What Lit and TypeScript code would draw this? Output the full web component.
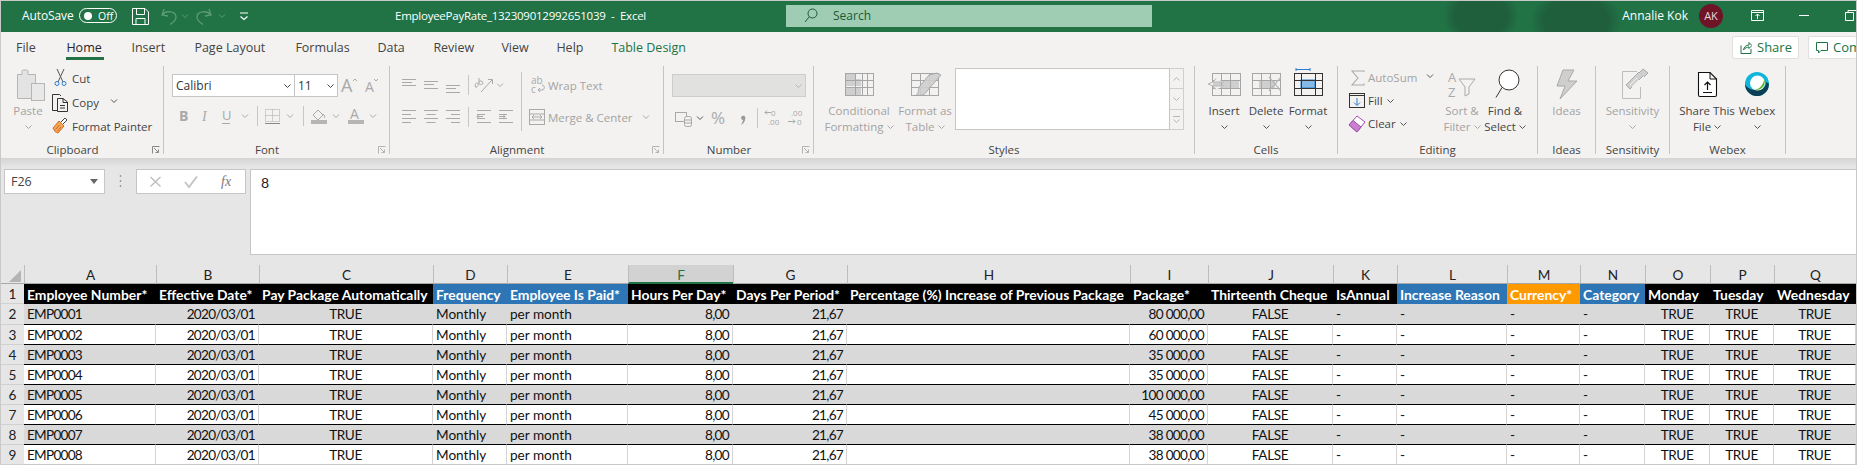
import { LitElement, html, css, svg } from "lit";
import { customElement } from "lit/decorators.js";

const DIS = "#a9a9a9";
const ic = (w: number, h: number, body: unknown) =>
  html`<svg class="ic" width=${w} height=${h} viewBox="0 0 ${w} ${h}" fill="none">${body}</svg>`;
const chevPath = (x: number, y: number, c: string) =>
  svg`<path d="M${x - 3} ${y - 1.5}L${x} ${y + 1.5}L${x + 3} ${y - 1.5}" stroke=${c} stroke-width="1"/>`;
const chev = (w: number, x: number, c = DIS, h = 22) => ic(w, h, chevPath(x, h / 2, c));
const vsep = (w: number, x: number, h = 22) =>
  ic(w, h, svg`<path d="M${x + 0.5} 1V${h - 1}" stroke="#c8c6c4"/>`);
const launcher = html`<svg class="launch" width="8" height="8" viewBox="0 0 8 8" fill="none"><path d="M.5 7.5V.5H7.5" stroke="#8a8886"/><path d="M2 2L6.5 6.5M3.5 6.5H6.5V3.5" stroke="#8a8886"/></svg>`;
const launcherDis = html`<svg class="launch" width="8" height="8" viewBox="0 0 8 8" fill="none"><path d="M.5 7.5V.5H7.5" stroke="#b5b5b5"/><path d="M2 2L6.5 6.5M3.5 6.5H6.5V3.5" stroke="#b5b5b5"/></svg>`;
const lines = (x: number, ys: number[], ws: number[], c = DIS) =>
  svg`${ys.map((y, i) => svg`<path d="M${x} ${y + 0.5}H${x + ws[i]}" stroke=${c}/>`)}`;
const alignTop = (o: number, ys: number[]) => lines(o, ys, [14, 10, 14]);

const grid = (x: number, y: number, w: number, h: number, cols: number[], rows: number[], c: string) => svg`
  <rect x=${x + 0.5} y=${y + 0.5} width=${w} height=${h} stroke=${c}/>
  ${cols.map((v) => svg`<path d="M${x + v + 0.5} ${y}V${y + h}" stroke=${c}/>`)}
  ${rows.map((v) => svg`<path d="M${x} ${y + v + 0.5}H${x + w}" stroke=${c}/>`)}`;

const columns = [
  { l: "A", w: 132, h: "Employee Number*" },
  { l: "B", w: 103, h: "Effective Date*" },
  { l: "C", w: 174, h: "Pay Package Automatically" },
  { l: "D", w: 74, h: "Frequency", k: "blue" },
  { l: "E", w: 121, h: "Employee Is Paid*", k: "blue" },
  { l: "F", w: 105, h: "Hours Per Day*" },
  { l: "G", w: 114, h: "Days Per Period*" },
  { l: "H", w: 283, h: "Percentage (%) Increase of Previous Package" },
  { l: "I", w: 78, h: "Package*" },
  { l: "J", w: 125, h: "Thirteenth Cheque" },
  { l: "K", w: 64, h: "IsAnnual" },
  { l: "L", w: 110, h: "Increase Reason", k: "blue" },
  { l: "M", w: 73, h: "Currency*", k: "orange" },
  { l: "N", w: 65, h: "Category", k: "blue" },
  { l: "O", w: 65, h: "Monday" },
  { l: "P", w: 64, h: "Tuesday" },
  { l: "Q", w: 82, h: "Wednesday" },
];
const aligns = ["t", "r", "c", "", "", "r", "r", "", "r", "c", "", "", "", "", "c", "c", "c"];
const pay = ["80 000,00", "60 000,00", "35 000,00", "35 000,00", "100 000,00", "45 000,00", "38 000,00", "38 000,00"];
const rowsData = pay.map((p, i) => [
  `EMP000${i + 1}`, "2020/03/01", "TRUE", "Monthly", "per month", "8,00", "21,67", "", p, "FALSE", "-", "-", "-", "-", "TRUE", "TRUE", "TRUE",
]);
const tabs = [
  ["File", 50.4], ["Home", 65], ["Insert", 63], ["Page Layout", 101], ["Formulas", 82], ["Data", 56], ["Review", 68], ["View", 55], ["Help", 55], ["Table Design", 100],
] as [string, number][];

@customElement("app-root")
export class AppRoot extends LitElement {
  static styles = css`
    :host { display: block; width: 1857px; height: 465px; overflow: hidden; box-sizing: border-box; border: 1px solid #c9c9c9; border-bottom: 0; background: #e6e6e6; font-family: "Open Sans", "Noto Sans", sans-serif; font-size: 12px; color: #444; }
    .ic { display: block; flex: none; }
    /* title bar */
    .title { height: 31px; box-sizing: border-box; padding-bottom: 2px; display: flex; align-items: center; color: #fff; background: radial-gradient(ellipse 38px 30px at 1480px 15px, #1f5f3c 70%, transparent 100%), radial-gradient(ellipse 46px 34px at 1575px 20px, #1f5f3c 70%, transparent 100%), #217346; }
    .as { width: 57px; margin-left: 21px; flex: none; letter-spacing: -0.1px; }
    .toggle { width: 38px; height: 15px; box-sizing: border-box; border: 1px solid #fff; border-radius: 8px; flex: none; display: flex; align-items: center; font-size: 10.5px; }
    .knob { width: 8px; height: 8px; background: #fff; border-radius: 50%; margin: 0 6px 0 4px; }
    .fname { width: 528px; padding-left: 137px; box-sizing: border-box; flex: none; font-size: 11.5px; white-space: pre; letter-spacing: -0.25px; }
    .search { width: 366px; height: 22px; flex: none; background: #9fcdb3; color: #1b5a37; display: flex; align-items: center; gap: 15px; padding-left: 18px; box-sizing: border-box; }
    .user { flex: 1; text-align: right; padding-right: 11px; font-size: 12px; }
    .avatar { width: 24px; height: 24px; border-radius: 50%; background: #6f1326; display: flex; align-items: center; justify-content: center; font-size: 11px; color: #e8d7da; flex: none; }
    /* ribbon */
    .ribbon { background: #f3f2f1; height: 126px; }
    .tabs { height: 34px; display: flex; align-items: center; padding-left: 15px; box-sizing: border-box; }
    .tab { flex: none; height: 24px; line-height: 22px; font-size: 12.5px; color: #444; position: relative; white-space: nowrap; }
    .tab.on { color: #262626; }
    .tab.on i { position: absolute; left: 0; top: 20px; width: 38px; height: 3px; background: #217346; }
    .tab.design { color: #217346; }
    .spacer { flex: 1; }
    .btn { height: 23px; box-sizing: border-box; background: #fff; border: 1px solid #e1dfdd; display: flex; align-items: center; color: #217346; font-size: 13px; gap: 5px; border-radius: 2px; flex: none; }
    .share { width: 67px; padding-left: 7px; margin: 0 9px 4px 0; }
    .comments { width: 48px; padding-left: 7px; margin-bottom: 4px; overflow: hidden; white-space: nowrap; border-right: 0; }
    .groups { display: flex; height: 88px; }
    .g { box-sizing: border-box; height: 88px; flex: none; border-right: 1px solid #c4c4c4; display: flex; flex-direction: column; }
    .body { height: 76px; box-sizing: border-box; display: flex; flex: none; }
    .label { height: 12px; line-height: 16px; display: flex; align-items: flex-start; flex: none; font-size: 11.5px; }
    .label b { font-weight: 400; flex: 1; text-align: center; white-space: nowrap; }
    .label.pad b { padding-right: 8px; }
    .launch { margin: 4px 3px 0 0; flex: none; }
    .big { display: flex; flex-direction: column; align-items: center; flex: none; line-height: 16px; white-space: nowrap; font-size: 11.5px; }
    .line { height: 16px; display: flex; align-items: center; gap: 3px; }
    .dis { color: #a3a3a3; }
    .row { display: flex; align-items: center; flex: none; }
    .small { height: 24px; white-space: nowrap; font-size: 11.5px; }
    .small.e { height: 23px; }
    .stack { display: flex; flex-direction: column; flex: none; }
    .sw106 { width: 106px; }
    .w163 { width: 163px; } .w226 { width: 226px; } .w274 { width: 274px; } .w150 { width: 150px; } .w381 { width: 381px; } .w143 { width: 143px; } .w200 { width: 200px; } .w58 { width: 58px; } .w74 { width: 74px; } .w116 { width: 116px; }
    .ml1 { margin-left: 1px; } .ml2 { margin-left: 2px; } .ml9 { margin-left: 9px; } .ml6 { margin-left: 6px; } .ml8 { margin-left: 8px; } .ml7 { margin-left: 7px; } .ml4 { margin-left: 4px; }
    .bw36 { width: 36px; } .bw42 { width: 42px; } .bw76 { width: 76px; } .bw56 { width: 56px; } .bw50 { width: 50px; } .bw57 { width: 57px; } .bw73 { width: 73px; } .bw66 { width: 66px; } .bw34 { width: 34px; }
    .font { padding: 8px 0 0 8px; gap: 8px; }
    .combo { height: 23px; box-sizing: border-box; background: #fff; border: 1px solid #c6c6c6; display: flex; align-items: center; font-size: 12px; color: #333; flex: none; justify-content: space-between; padding: 0 3px; }
    .combo + .combo { border-left: 0; }
    .cw123 { width: 123px; } .cw43 { width: 43px; }
    .a-rows { padding: 8px 0 0 10px; width: 131px; box-sizing: border-box; gap: 10px; }
    .longsep { width: 1px; height: 59px; margin: 6px 0 0 0; background: #c8c6c4; flex: none; }
    .a-col { padding-top: 8px; gap: 10px; }
    .r22 { height: 22px; font-size: 11.5px; white-space: nowrap; }
    .num { padding: 8px 0 0 8px; gap: 10px; }
    .numbox { width: 134px; height: 23px; box-sizing: border-box; background: #e1e1e0; border: 1px solid #cdcdcd; display: flex; align-items: center; justify-content: flex-end; padding-right: 3px; }
    .gallery { width: 215px; height: 62px; box-sizing: border-box; background: #fff; border: 1px solid #c8c6c4; margin: 2px 0 0 2px; flex: none; }
    .scroll { width: 14px; height: 62px; margin-top: 2px; flex: none; display: flex; flex-direction: column; }
    .scroll span { flex: 1; border: 1px solid #cfcfcf; border-left: 0; display: flex; align-items: center; justify-content: center; }
    .scroll span + span { border-top: 0; }
    /* formula bar */
    .fbar { height: 107px; box-sizing: border-box; padding-top: 11px; display: flex; align-items: flex-start; background: linear-gradient(#d4d4d4, #e6e6e6 9px); }
    .name { width: 101px; height: 25px; box-sizing: border-box; margin-left: 3px; background: #fff; border: 1px solid #c6c6c6; display: flex; align-items: center; justify-content: space-between; padding: 0 6px; color: #444; font-size: 12.5px; flex: none; }
    .fxbox { width: 110px; height: 25px; box-sizing: border-box; background: #fff; border: 1px solid #c6c6c6; flex: none; }
    .input { flex: 1; height: 86px; margin-left: 4px; box-sizing: border-box; background: #fff; border: 1px solid #c6c6c6; border-right: 0; padding: 4px 0 0 10px; font: 14px Lato, sans-serif; color: #222; }
    /* sheet */
    .sheet { display: grid; grid-template-rows: 19px 20px 21px repeat(7, 20px); font: 13.6px Lato, "Open Sans", sans-serif; color: #111; }
    .sheet > div { box-sizing: border-box; white-space: nowrap; min-width: 0; }
    .sheet > .corner { background: #e6e6e6; border-bottom: 1px solid #a8a8a8; padding: 5px 0 0 8px; }
    .sheet > .ch { background: #e6e6e6; text-align: center; border-bottom: 1px solid #a8a8a8; border-left: 1px solid #bdbdbd; color: #222; line-height: 21px; }
    .sheet > .ch.sel { background: #d2d2d2; color: #217346; border-bottom: 2px solid #217346; }
    .sheet > .rh { background: #e6e6e6; text-align: center; color: #222; border-bottom: 1px solid #d0d0d0; line-height: 21px; }
    .sheet > .hd { background: #000; color: #fff; font-weight: 700; padding-left: 3px; line-height: 21px; font-size: 13.9px; }
    .sheet > .hd.blue { background: #2e75b6; }
    .sheet > .hd.orange { background: #ff9900; }
    .sheet > .c { padding: 0 3px; border-right: 1px solid #d4d4d4; border-bottom: 1px solid #000; line-height: 21px; }
    .sheet > .c.g1 { background: #d9d9d9; border-right-color: #d9d9d9; }
    .sheet > .c.w1 { background: #fff; }
    .sheet > .c.last { border-bottom-color: #c8c8c8; }
    .sheet > .c.r { text-align: right; letter-spacing: -0.7px; }
    .sheet > .c.t { letter-spacing: -0.75px; }
    .sheet > .c.c2 { text-align: center; letter-spacing: -0.4px; }
  `;

  render() {
    return html`${this.titleBar()}${this.ribbon()}${this.formulaBar()}${this.sheet()}`;
  }

  titleBar() {
    const dim = "#5d9a78";
    return html`<div class="title">
      <span class="as">AutoSave</span>
      <span class="toggle"><span class="knob"></span>Off</span>
      ${ic(38, 22, svg`<path d="M15.5 3.5H28L31.5 7V19.5H15.5ZM19.5 3.5V9.5H27.5V3.5M19 19.5V13.5H28V19.5" stroke="#fff" stroke-width="1"/>`)}
      ${ic(26, 22, svg`<path d="M9 4L7 10L13 11M7 10C11 5 21 6 21 12C21 15 19 17 15 19.5" stroke=${dim} stroke-width="1.3"/>`)}
      ${chev(11, 4, dim)}
      ${ic(26, 22, svg`<path d="M17 4L19 10L13 11M19 10C15 5 5 6 5 12C5 15 7 17 11 19.5" stroke=${dim} stroke-width="1.3"/>`)}
      ${chev(12, 4, dim)}
      ${ic(28, 22, svg`<path d="M10 8H18" stroke="#fff"/><path d="M10.5 11.5L14 14.5L17.5 11.5" stroke="#fff" stroke-width="1.2"/>`)}
      <span class="fname">EmployeePayRate_132309012992651039  -  Excel</span>
      <div class="search">
        ${ic(14, 15, svg`<circle cx="8.5" cy="5.5" r="4.5" stroke="#1b5a37"/><path d="M5.3 8.7L1 14" stroke="#1b5a37"/>`)}
        <span>Search</span>
      </div>
      <span class="user">Annalie Kok</span>
      <span class="avatar">AK</span>
      ${ic(133, 22, svg`
        <path d="M28.5 5.5H40.5V15.5H28.5ZM28.5 7.5H40.5" stroke="#fff"/><path d="M34.5 14V9M32.5 11L34.5 9L36.5 11" stroke="#fff"/>
        <path d="M76 10.5H86" stroke="#fff"/>
        <path d="M122.5 7.5H130.5V15.5H122.5ZM125 7V5.5H133" stroke="#fff"/>`)}
    </div>`;
  }

  ribbon() {
    return html`<div class="ribbon">
      <div class="tabs">
        ${tabs.map(([t, w]) => html`<span class="tab ${t === "Home" ? "on" : ""} ${t === "Table Design" ? "design" : ""}" style="width:${w}px">${t}${t === "Home" ? html`<i></i>` : ""}</span>`)}
        <span class="spacer"></span>
        <span class="btn share">${ic(12, 14, svg`<path d="M1 5.5V13.5H11V9M3.5 10C4 7 6 5 9 5V2.5L12 5.5L9 8.5V7C7 7 5 8 3.5 10Z" stroke="#217346"/>`)}Share</span>
        <span class="btn comments">${ic(12, 13, svg`<path d="M.5 1.5H11.5V9.5H5L2.5 12V9.5H.5Z" stroke="#217346"/>`)}Comments</span>
      </div>
      <div class="groups">
        ${this.clipboard()}${this.fontGroup()}${this.alignment()}${this.number()}${this.styles_()}${this.cells()}${this.editing()}${this.ideas()}${this.sensitivity()}${this.webex()}
      </div>
    </div>`;
  }

  clipboard() {
    return html`<div class="g w163">
      <div class="body">
        <div class="big bw36 ml9 dis">
          ${ic(36, 37, svg`
            <path d="M7.5 8.5H12V5.5C12 4 13 4 15 4C17 4 18 4 18 5.5V8.5H25.5V32.5H7.5Z" fill="#e3e3e3" stroke="#b5b5b5"/>
            <rect x="21.5" y="17.5" width="13" height="17" fill="#e8e8e8" stroke="#b5b5b5"/>`)}
          <span class="line">Paste</span>
          <span class="line">${ic(7, 4, chevPath(3.5, 2, DIS))}</span>
        </div>
        <div class="stack ml6">
          <div class="row small">
            ${ic(16, 24, svg`
              <path d="M5 3L11 16M12 3L6 16" stroke="#555"/>
              <circle cx="5" cy="17.5" r="2" stroke="#2b7cd3"/><circle cx="12" cy="17.5" r="2" stroke="#2b7cd3"/>`)}
            <span class="ml4">Cut</span>
          </div>
          <div class="row small">
            ${ic(16, 24, svg`
              <path d="M6 20.5H.5V4.5H7.5L9 6" stroke="#333"/>
              <path d="M5.5 8.5H11L15.5 12V21.5H5.5ZM11 8.5V12.5H15.5M8 15.5H13M8 18H13" stroke="#333"/>`)}
            <span class="ml4">Copy</span>
            ${ic(22, 24, chevPath(15, 11, "#555"))}
          </div>
          <div class="row small">
            ${ic(16, 24, svg`
              <path d="M1 14L7 7L12 12L6 19L3 17.5Z" fill="#f2a65a" stroke="#d9691e"/>
              <path d="M9 8L13 4L15 6L11 10" fill="#fff" stroke="#444"/>
              <path d="M3.5 15.5L7.5 11M5.5 17L9 13" stroke="#d9691e"/>`)}
            <span class="ml4">Format Painter</span>
          </div>
        </div>
      </div>
      <div class="label pad"><b>Clipboard</b>${launcher}</div>
    </div>`;
  }

  fontGroup() {
    return html`<div class="g w226">
      <div class="body stack font">
        <div class="row">
          <div class="combo cw123"><span>Calibri</span>${ic(7, 4, chevPath(3.5, 2, "#444"))}</div>
          <div class="combo cw43"><span>11</span>${ic(7, 4, chevPath(3.5, 2, "#444"))}</div>
          ${ic(24, 23, svg`<text x="3" y="18" font-size="18" fill=${DIS} font-family="Open Sans">A</text><path d="M15 7L17 5L19 7" stroke=${DIS}/>`)}
          ${ic(20, 23, svg`<text x="3" y="18" font-size="14" fill=${DIS} font-family="Open Sans">A</text><path d="M12 5L14 7L16 5" stroke=${DIS}/>`)}
        </div>
        <div class="row">
          ${ic(23, 22, svg`<text x="7" y="16" font-size="14" font-weight="700" fill=${DIS} font-family="Open Sans">B</text>`)}
          ${ic(20, 22, svg`<text x="7" y="16" font-size="14" font-style="italic" fill=${DIS} font-family="Liberation Serif">I</text>`)}
          ${ic(23, 22, svg`<text x="7" y="15" font-size="13" fill=${DIS} font-family="Open Sans">U</text><path d="M7 18.5H15" stroke=${DIS}/>`)}
          ${chev(14, 7)}
          ${vsep(10, 5)}
          ${ic(21, 22, svg`<path d="M3.5 4.5H17.5V16.5H3.5ZM10.5 4.5V16.5M3.5 10.5H17.5" stroke=${DIS} stroke-dasharray="1 1"/><path d="M3 18.5H18" stroke="#888"/>`)}
          ${chev(14, 7)}
          ${vsep(11, 6)}
          ${ic(22, 22, svg`<path d="M5 10L10 5L15 10L10 15Z" stroke=${DIS}/><path d="M15 9C17 10 17 13 16 13" stroke=${DIS}/><rect x="3" y="15" width="16" height="4" fill="#b5b5b5"/>`)}
          ${chev(12, 6)}
          ${ic(26, 22, svg`<text x="8" y="14" font-size="14" fill=${DIS} font-family="Open Sans">A</text><rect x="6" y="15" width="16" height="4" fill="#b5b5b5"/>`)}
          ${chev(12, 5)}
        </div>
      </div>
      <div class="label pad"><b>Font</b>${launcherDis}</div>
    </div>`;
  }

  alignment() {
    const al = (kind: string) => {
      const ys = [4.5, 8.5, 12.5, 16.5];
      const w = [14, 9, 14, 9];
      return svg`${ys.map((y, i) => {
        const x = kind === "l" ? 2 : kind === "c" ? 2 + (14 - w[i]) / 2 : 16 - w[i];
        return svg`<path d="M${x} ${y}H${x + w[i]}" stroke=${DIS}/>`;
      })}`;
    };
    return html`<div class="g w274">
      <div class="body">
        <div class="stack a-rows">
          <div class="row">
            ${ic(22, 22, alignTop(2, [5, 8, 11]))}
            ${ic(22, 22, alignTop(2, [7, 10, 14]))}
            ${ic(22, 22, alignTop(2, [11, 14, 18]))}
            ${vsep(5, 2)}
            ${ic(26, 22, svg`<g transform="rotate(-40 9 11)"><path d="M3.5 8.5H13" stroke="none"/></g><path d="M5 13.5C3 11 5 8 7 9.5C8 10.5 7 12.5 5 13.5ZM8 4V10M8 8C10 5.5 13 8 11.5 10C10.5 11 9 10.5 8 9.5M10 18L21 6M17 5.5H21.5V10" stroke=${DIS}/>`)}
            ${chev(8, 3)}
          </div>
          <div class="row">
            ${ic(22, 22, al("l"))}${ic(22, 22, al("c"))}${ic(22, 22, al("r"))}
            ${vsep(5, 2)}
            ${ic(24, 22, svg`${lines(6, [4, 8, 12, 16], [14, 8, 8, 14])}<path d="M12 10.5H6M8 8.5L6 10.5L8 12.5" stroke=${DIS}/>`)}
            ${ic(22, 22, svg`${lines(4, [4, 8, 12, 16], [14, 8, 8, 14])}<path d="M4 10.5H10M8 8.5L10 10.5L8 12.5" stroke=${DIS}/>`)}
          </div>
        </div>
        <div class="longsep"></div>
        <div class="stack a-col dis">
          <div class="row r22">
            ${ic(24, 22, svg`<text x="9" y="10" font-size="10" fill=${DIS} font-family="Open Sans">ab</text><text x="9" y="19" font-size="10" fill=${DIS} font-family="Open Sans">c</text><path d="M16 16H20C23 16 23 11 20 11M16 16L18 14M16 16L18 18" stroke=${DIS}/>`)}
            <span class="ml2">Wrap Text</span>
          </div>
          <div class="row r22">
            ${ic(24, 22, svg`<rect x="7.5" y="3.5" width="15" height="15" stroke=${DIS}/><path d="M7.5 8H22.5M7.5 14H22.5" stroke=${DIS}/><path d="M10 11H20M12 9L10 11L12 13M18 9L20 11L18 13" stroke=${DIS}/>`)}
            <span class="ml2">Merge &amp; Center</span>
            ${ic(20, 22, chevPath(13, 11, DIS))}
          </div>
        </div>
      </div>
      <div class="label pad"><b>Alignment</b>${launcherDis}</div>
    </div>`;
  }

  number() {
    return html`<div class="g w150">
      <div class="body stack num">
        <div class="numbox">${ic(7, 4, chevPath(3.5, 2, "#b5b5b5"))}</div>
        <div class="row">
          ${ic(23, 22, svg`<rect x="3.5" y="5.5" width="11" height="9" stroke=${DIS}/><rect x="12.5" y="9.5" width="7" height="10" rx="2" fill="#f3f2f1" stroke=${DIS}/><path d="M12.5 13H19.5M12.5 16H19.5" stroke=${DIS}/>`)}
          ${chev(11, 5, "#555")}
          ${ic(28, 22, svg`<text x="5" y="17" font-size="17" fill=${DIS} font-family="Open Sans">%</text>`)}
          ${ic(19, 22, svg`<path d="M8 9C11 8 12 10 11 13C10.5 15 9 17 7 18C8.5 15 9 14 9 13C7 13 6.5 10 8 9Z" fill="#9a9a9a"/>`)}
          ${vsep(8, 4)}
          ${ic(23, 22, svg`<text x="10" y="9" font-size="8" fill=${DIS} font-family="Open Sans">0</text><text x="7" y="18" font-size="8" fill=${DIS} font-family="Open Sans">.00</text><path d="M10 5.5H4M6 3.5L4 5.5L6 7.5" stroke=${DIS}/>`)}
          ${ic(22, 22, svg`<text x="7" y="9" font-size="8" fill=${DIS} font-family="Open Sans">.00</text><text x="13" y="18" font-size="8" fill=${DIS} font-family="Open Sans">0</text><path d="M4 14.5H11M9 12.5L11 14.5L9 16.5" stroke=${DIS}/>`)}
        </div>
      </div>
      <div class="label pad"><b>Number</b>${launcherDis}</div>
    </div>`;
  }

  styles_() {
    return html`<div class="g w381">
      <div class="body">
        <div class="big bw76 ml7 dis">
          ${ic(76, 37, svg`
            <rect x="24" y="7" width="10" height="6" fill="#cfcfcf"/><rect x="24" y="13" width="16" height="7" fill="#cfcfcf"/><rect x="24" y="21" width="16" height="8" fill="#cfcfcf"/>
            ${grid(24, 7, 28, 22, [10, 17, 22], [7, 14], "#a6a6a6")}`)}
          <span class="line">Conditional</span>
          <span class="line">Formatting ${ic(7, 4, chevPath(3.5, 2, DIS))}</span>
        </div>
        <div class="big bw56 dis">
          ${ic(56, 37, svg`
            ${grid(14, 7, 27, 22, [9, 18], [7, 14], "#a6a6a6")}
            <path d="M22 21L32 9L40 7L44 9L30 25C28 29 24 30 19 29C22 28 21 24 22 21Z" fill="#cfcfcf" stroke="#a6a6a6" opacity=".9"/>`)}
          <span class="line">Format as</span>
          <span class="line">Table ${ic(7, 4, chevPath(3.5, 2, DIS))}</span>
        </div>
        <div class="gallery"></div>
        <div class="scroll">
          <span>${ic(7, 4, svg`<path d="M.5 3.5L3.5 .5L6.5 3.5" stroke="#b5b5b5"/>`)}</span>
          <span>${ic(7, 4, chevPath(3.5, 2, "#b5b5b5"))}</span>
          <span>${ic(7, 7, svg`<path d="M0 .5H7M.5 3.5L3.5 6.5L6.5 3.5" stroke="#b5b5b5"/>`)}</span>
        </div>
      </div>
      <div class="label"><b>Styles</b></div>
    </div>`;
  }

  cells() {
    const cv = chevPath(3.5, 2, "#555");
    return html`<div class="g w143">
      <div class="body ml8">
        <div class="big bw42">
          ${ic(42, 37, svg`
            <rect x="9" y="14" width="27" height="8" fill="#cfcfcf"/>
            ${grid(9, 7, 28, 22, [9, 18], [7, 15], "#a6a6a6")}
            <path d="M21 16H10L13 12.5M21 20H10L13 23.5M10 16L5 18L10 20" fill="#f3f2f1" stroke="#b5b5b5"/>`)}
          <span class="line">Insert</span><span class="line">${ic(7, 4, cv)}</span>
        </div>
        <div class="big bw42">
          ${ic(42, 37, svg`
            <rect x="14" y="14" width="16" height="8" fill="#cfcfcf"/>
            ${grid(7, 7, 28, 22, [9, 18], [7, 15], "#a6a6a6")}
            <path d="M24 11L36 25M36 11L24 25" stroke="#b5b5b5" stroke-width="1.2"/>`)}
          <span class="line">Delete</span><span class="line">${ic(7, 4, cv)}</span>
        </div>
        <div class="big bw42">
          ${ic(42, 37, svg`
            <path d="M9 3.5H23M9 2V5M23 2V5" stroke="#2b7cd3"/>
            <rect x="14" y="14" width="14" height="8" fill="#85b9e6" stroke="#2b7cd3"/>
            ${grid(7, 7, 28, 22, [7, 21], [7, 15], "#333")}`)}
          <span class="line">Format</span><span class="line">${ic(7, 4, cv)}</span>
        </div>
      </div>
      <div class="label"><b>Cells</b></div>
    </div>`;
  }

  editing() {
    const cv = (c = "#555") => ic(7, 4, chevPath(3.5, 2, c));
    return html`<div class="g w200">
      <div class="body">
        <div class="stack sw106">
          <div class="row small e dis">
            ${ic(29, 23, svg`<path d="M26 6V5H14L20 12L14 19H26V17.5" stroke=${DIS} stroke-width="1.1"/>`)}
            <span class="ml1">AutoSum</span>
            ${ic(20, 23, chevPath(13, 10, "#555"))}
          </div>
          <div class="row small e">
            ${ic(29, 23, svg`<rect x="11.5" y="4.5" width="15" height="14" stroke="#333"/><path d="M11.5 6.5H26.5" stroke="#333"/><path d="M19 9V16M16 13.5L19 16.5L22 13.5" stroke="#2b7cd3"/>`)}
            <span class="ml1">Fill</span><span class="ml4">${cv()}</span>
          </div>
          <div class="row small e">
            ${ic(29, 23, svg`<path d="M11 13L19 4L27 10L19 20Z" fill="#fff" stroke="#a54cb0"/><path d="M11 13L15 8.5L23 15L19 20Z" fill="#c881cf" stroke="#a54cb0"/>`)}
            <span class="ml1">Clear</span><span class="ml4">${cv()}</span>
          </div>
        </div>
        <div class="big bw36 dis">
          ${ic(36, 37, svg`
            <text x="4" y="16" font-size="13" fill=${DIS} font-family="Open Sans">A</text>
            <text x="4" y="31" font-size="13" fill=${DIS} font-family="Open Sans">Z</text>
            <path d="M15 13H31L25 21V28L21 30V21Z" stroke=${DIS}/>`)}
          <span class="line">Sort &amp;</span>
          <span class="line">Filter ${cv(DIS)}</span>
        </div>
        <div class="big bw50">
          ${ic(50, 37, svg`
            <circle cx="29" cy="14" r="10" stroke="#333" fill="#fff"/>
            <path d="M22 21.5L16 31.5" stroke="#333"/>`)}
          <span class="line">Find &amp;</span>
          <span class="line">Select ${cv()}</span>
        </div>
      </div>
      <div class="label"><b>Editing</b></div>
    </div>`;
  }

  ideas() {
    return html`<div class="g w58">
      <div class="body">
        <div class="big bw57 dis">
          ${ic(57, 37, svg`<path d="M25 4H36L30 15H39L22 33L27 20H19Z" fill="#cfcfcf" stroke="#a9a9a9"/>`)}
          <span class="line">Ideas</span>
        </div>
      </div>
      <div class="label"><b>Ideas</b></div>
    </div>`;
  }

  sensitivity() {
    return html`<div class="g w74">
      <div class="body">
        <div class="big bw73 dis">
          ${ic(73, 37, svg`
            <path d="M26.5 5.5H41M26.5 5.5V32.5H44.5V21" stroke="#bcbcbc"/>
            <path d="M30 19L43 6L47 10L34 23Z" fill="#cfcfcf" stroke="#a9a9a9"/>
            <path d="M43 7L47 3L52 7L48 11" fill="#cfcfcf" stroke="#a9a9a9"/>
            <path d="M34 19L41 12M36 21L43 14" stroke="#f3f2f1"/>`)}
          <span class="line">Sensitivity</span>
          <span class="line">${ic(7, 4, chevPath(3.5, 2, DIS))}</span>
        </div>
      </div>
      <div class="label"><b>Sensitivity</b></div>
    </div>`;
  }

  webex() {
    return html`<div class="g w116">
      <div class="body ml4">
        <div class="big bw66">
          ${ic(66, 37, svg`
            <path d="M24.5 6.5H36L42.5 13V29C42.5 30 42 30.5 41 30.5H26C25 30.5 24.5 30 24.5 29Z" fill="#fff" stroke="#111" stroke-width="1.1"/>
            <path d="M36 6.5V13H42.5" stroke="#111"/>
            <path d="M33.5 24V16M30.5 19L33.5 16L36.5 19M29 26.5H38" stroke="#111" stroke-width="1.2"/>`)}
          <span class="line">Share This</span>
          <span class="line">File ${ic(7, 4, chevPath(3.5, 2, "#555"))}</span>
        </div>
        <div class="big bw34">
          ${ic(34, 37, svg`
            <circle cx="17" cy="18" r="12" fill="#12b5d9"/>
            <path d="M5 18A12 12 0 0 0 29 18C29 22 24 24 17 24C11 24 7 22 5 18Z" fill="#0e3f54"/>
            <path d="M11 25C18 27 25 24 26.5 16L29 18C28 25 22 30 17 30C15 30 13 28 11 25Z" fill="#0e3f54"/>
            <circle cx="17.5" cy="17" r="7.5" fill="#fff"/>
            <path d="M24.5 13C26 19 22 25 14 24C20 23 23 19 24.5 13Z" fill="#5cb531"/>`)}
          <span class="line">Webex</span>
          <span class="line">${ic(7, 4, chevPath(3.5, 2, "#555"))}</span>
        </div>
      </div>
      <div class="label"><b>Webex</b></div>
    </div>`;
  }

  formulaBar() {
    return html`<div class="fbar">
      <div class="name"><span>F26</span>${ic(8, 5, svg`<path d="M0 0H8L4 5Z" fill="#666"/>`)}</div>
      ${ic(31, 25, svg`<path d="M15.5 6V8M15.5 11V13M15.5 16V18" stroke="#9a9a9a" stroke-width="1.4"/>`)}
      <div class="fxbox">
        ${ic(108, 23, svg`
          <path d="M13.5 7L23.5 16.5M23.5 7L13.5 16.5" stroke="#bdbdbd" stroke-width="1.4"/>
          <path d="M48 12L52 17L60 6.5" stroke="#c4c4c4" stroke-width="2"/>
          <text x="84" y="16" font-size="14" font-style="italic" font-family="Liberation Serif" fill="#7a7a7a">fx</text>`)}
      </div>
      <div class="input">8</div>
    </div>`;
  }

  sheet() {
    const tpl = "23px " + columns.map((c) => c.w + "px").join(" ");
    return html`<div class="sheet" style="grid-template-columns:${tpl}">
      <div class="corner">${ic(12, 12, svg`<path d="M12 0V12H0Z" fill="#b4b4b4"/>`)}</div>
      ${columns.map((c) => html`<div class="ch ${c.l === "F" ? "sel" : ""}">${c.l}</div>`)}
      <div class="rh">1</div>
      ${columns.map((c) => html`<div class="hd ${c.k ?? ""}">${c.h}</div>`)}
      ${rowsData.map((r, i) => html`
        <div class="rh">${i + 2}</div>
        ${r.map((v, j) => html`<div class="c ${i % 2 ? "w1" : "g1"} ${i === 7 ? "last" : ""} ${aligns[j] === "r" ? "r" : aligns[j] === "c" ? "c2" : aligns[j] === "t" ? "t" : ""}">${v}</div>`)}
      `)}
    </div>`;
  }
}
